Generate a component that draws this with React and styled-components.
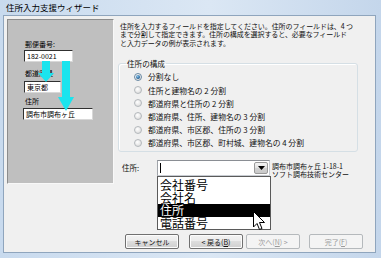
import React from 'react';
import styled, { createGlobalStyle } from 'styled-components';

const GlobalStyle = createGlobalStyle`
  html, body { margin: 0; padding: 0; }
  body {
    width: 381px; height: 258px; overflow: hidden;
    font-family: "Noto Sans CJK JP", "Noto Sans", sans-serif;
    color: #111;
  }
`;

const Window = styled.div`
  width: 381px;
  height: 258px;
  box-sizing: border-box;
  display: flex;
  flex-direction: column;
  padding: 0 5px 5px 3px;
  background: linear-gradient(to right, #c8daee 0%, #dbe7f4 55%, #c4d6eb 100%);
`;

const TitleBar = styled.div`
  height: 15px;
  display: flex;
  align-items: center;
  padding-left: 3px;
  font-size: 8.5px;
  line-height: 15px;
  color: #000;
  white-space: nowrap;
`;

const Content = styled.div`
  flex: 1;
  display: flex;
  flex-direction: column;
  box-sizing: border-box;
  padding: 3px;
  background: #f0f0f0;
  border: 1px solid #8fa5bd;
`;

const MainRow = styled.div`
  display: flex;
  align-items: flex-start;
`;

const PreviewPanel = styled.div`
  position: relative;
  width: 107px;
  height: 165px;
  box-sizing: border-box;
  flex-shrink: 0;
  display: flex;
  flex-direction: column;
  padding: 20px 0 0 16px;
  background: #bfbfbf;
  border: 1px solid;
  border-color: #8c8c8c #f8f8f8 #f8f8f8 #8c8c8c;
`;

const PreviewLabel = styled.div`
  font-size: 7px;
  line-height: 8px;
  height: 8px;
  margin-top: ${p => p.$mt || 0}px;
  padding-left: 1px;
  color: #000;
  white-space: nowrap;
`;

const PreviewInput = styled.div`
  width: ${p => p.$w}px;
  height: 12px;
  box-sizing: border-box;
  margin-top: ${p => p.$mt || 0}px;
  margin-left: ${p => p.$ml || 0}px;
  padding-left: 2px;
  background: #fff;
  border: 1px solid;
  border-color: #303030 #d8d8d8 #d8d8d8 #303030;
  font-size: 7px;
  line-height: 10px;
  color: #000;
  white-space: nowrap;
  overflow: hidden;
`;

const ArrowLayer = styled.svg`
  position: absolute;
  left: 0;
  top: 0;
  width: 105px;
  height: 163px;
  pointer-events: none;
`;

const RightColumn = styled.div`
  display: flex;
  flex-direction: column;
  margin-left: 4px;
  width: 240px;
`;

const Description = styled.div`
  margin-top: 3px;
  padding-left: 2px;
  font-size: 7px;
  letter-spacing: -0.08px;
  line-height: 8.4px;
  white-space: nowrap;
  color: #111;
`;

const GroupBox = styled.fieldset`
  margin: 12px 0 0 0;
  padding: 2px 0 2px 15px;
  border: 1px solid #d5dfe5;
  border-radius: 3px;
  box-shadow: inset 1px 1px 0 #fff;
  min-width: 0;
`;

const GroupLegend = styled.legend`
  margin-left: -8px;
  padding: 0 1px;
  font-size: 7.6px;
  line-height: 9px;
  color: #111;
`;

const RadioRow = styled.div`
  display: flex;
  align-items: center;
  height: 13.2px;
  gap: 6px;
  font-size: 7.8px;
  white-space: nowrap;
  color: #111;
`;

const RadioCircle = styled.span`
  width: 8px;
  height: 8px;
  box-sizing: border-box;
  border-radius: 50%;
  border: 1px solid ${p => (p.$checked ? '#6a8aa4' : '#b4b8bc')};
  background: radial-gradient(circle at 40% 35%, #ffffff 0%, #e8e8e8 55%, #d2d2d2 100%);
  display: flex;
  align-items: center;
  justify-content: center;
  flex-shrink: 0;
  &::after {
    content: '';
    display: ${p => (p.$checked ? 'block' : 'none')};
    width: 4px;
    height: 4px;
    border-radius: 50%;
    background: radial-gradient(circle at 40% 35%, #8cc4ea 0%, #2a6aa0 60%, #123e66 100%);
  }
`;

const FieldRow = styled.div`
  display: flex;
  align-items: flex-start;
  margin-top: 8px;
`;

const FieldLabel = styled.div`
  width: 39px;
  padding-left: 4px;
  box-sizing: border-box;
  font-size: 7.5px;
  line-height: 16px;
  white-space: nowrap;
  color: #111;
`;

const ComboWrap = styled.div`
  position: relative;
  width: 113px;
  flex-shrink: 0;
`;

const ComboBox = styled.div`
  height: 16px;
  box-sizing: border-box;
  display: flex;
  align-items: center;
  justify-content: space-between;
  padding: 0 1px 0 2px;
  background: #fff;
  border: 1px solid;
  border-color: #8a8e94 #c8ccd2 #c8ccd2 #a0a4aa;
`;

const Caret = styled.span`
  width: 1px;
  height: 10px;
  background: #000;
`;

const DropButton = styled.span`
  width: 14px;
  height: 12px;
  box-sizing: border-box;
  border: 1px solid #9a9a9a;
  border-radius: 2px;
  background: linear-gradient(#f4f4f4, #e2e2e2 50%, #d2d2d2 50%, #c8c8c8);
  display: flex;
  align-items: center;
  justify-content: center;
`;

const DropList = styled.div`
  position: absolute;
  left: 0;
  top: 100%;
  width: 114px;
  box-sizing: border-box;
  padding-top: 2px;
  background: #fff;
  border: 1px solid #5a5a5a;
  z-index: 2;
`;

const DropItem = styled.div`
  height: 12.5px;
  padding-left: 2px;
  font-size: 12px;
  line-height: 12.5px;
  background: ${p => (p.$selected ? '#000' : '#fff')};
  color: ${p => (p.$selected ? '#fff' : '#000')};
  white-space: nowrap;
`;

const Cursor = styled.svg`
  position: absolute;
  left: 95px;
  top: 34px;
  width: 13px;
  height: 20px;
`;

const AddressSample = styled.div`
  margin-left: 2px;
  margin-top: 2px;
  font-size: 7px;
  line-height: 8px;
  white-space: nowrap;
  color: #111;
`;

const ButtonRow = styled.div`
  display: flex;
  justify-content: flex-end;
  margin-top: auto;
  padding-right: 9px;
`;

const Button = styled.div`
  width: 54px;
  height: 15px;
  box-sizing: border-box;
  margin-left: ${p => p.$gap || 0}px;
  display: flex;
  align-items: center;
  justify-content: center;
  border-radius: 2px;
  font-size: 7px;
  white-space: nowrap;
  border: 1px solid ${p => (p.$disabled ? '#b5b9bc' : '#707070')};
  color: ${p => (p.$disabled ? '#9a9a9a' : '#111')};
  background: ${p =>
    p.$disabled
      ? '#f4f4f4'
      : 'linear-gradient(#f2f2f2, #ebebeb 50%, #dddddd 50%, #cfcfcf)'};
  box-shadow: ${p => (p.$disabled ? 'none' : 'inset 0 0 0 1px #fcfcfc')};
  u { text-decoration: underline; }
`;

const radios = [
  '分割なし',
  '住所と建物名の 2 分割',
  '都道府県と住所の 2 分割',
  '都道府県、住所、建物名の 3 分割',
  '都道府県、市区郡、住所の 3 分割',
  '都道府県、市区郡、町村城、建物名の 4 分割',
];

const items = ['会社番号', '会社名', '住所', '電話番号'];

export default function App() {
  return (
    <>
      <GlobalStyle />
      <Window>
        <TitleBar>住所入力支援ウィザード</TitleBar>
        <Content>
          <MainRow>
            <PreviewPanel>
              <PreviewLabel>郵便番号:</PreviewLabel>
              <PreviewInput $w={49} $mt={2}>182-0021</PreviewInput>
              <PreviewLabel $mt={7}>都道府県</PreviewLabel>
              <PreviewInput $w={37} $mt={4}>東京都</PreviewInput>
              <PreviewLabel $mt={4}>住所</PreviewLabel>
              <PreviewInput $w={70} $mt={3} $ml={-1}>調布市調布ヶ丘</PreviewInput>
              <ArrowLayer viewBox="0 0 105 163">
                <rect x="34" y="41" width="8" height="13" fill="#1ae4ee" />
                <polygon points="30,53 46,53 38,62" fill="#1ae4ee" />
                <rect x="54" y="41" width="8" height="37" fill="#1ae4ee" />
                <polygon points="50,77 66,77 58,91" fill="#1ae4ee" />
              </ArrowLayer>
            </PreviewPanel>
            <RightColumn>
              <Description>
                住所を入力するフィールドを指定してください。住所のフィールドは、4 つ
                <br />
                まで分割して指定できます。住所の構成を選択すると、必要なフィールド
                <br />
                と入力データの例が表示されます。
              </Description>
              <GroupBox>
                <GroupLegend>住所の構成</GroupLegend>
                {radios.map((r, i) => (
                  <RadioRow key={r}>
                    <RadioCircle $checked={i === 0} />
                    {r}
                  </RadioRow>
                ))}
              </GroupBox>
              <FieldRow>
                <FieldLabel>住所:</FieldLabel>
                <ComboWrap>
                  <ComboBox>
                    <Caret />
                    <DropButton>
                      <svg width="7" height="4" viewBox="0 0 7 4">
                        <polygon points="0,0 7,0 3.5,4" fill="#000" />
                      </svg>
                    </DropButton>
                  </ComboBox>
                  <DropList>
                    {items.map(it => (
                      <DropItem key={it} $selected={it === '住所'}>
                        {it}
                      </DropItem>
                    ))}
                    <Cursor viewBox="0 0 13 20">
                      <path
                        d="M0.5 0.5 L0.5 16 L4 12.5 L6.5 18.5 L9 17.5 L6.5 11.5 L11.5 11.5 Z"
                        fill="#fff"
                        stroke="#000"
                        strokeWidth="1"
                        strokeLinejoin="miter"
                      />
                    </Cursor>
                  </DropList>
                </ComboWrap>
                <AddressSample>
                  調布市調布ヶ丘 1-18-1
                  <br />
                  ソフト調布技術センター
                </AddressSample>
              </FieldRow>
            </RightColumn>
          </MainRow>
          <ButtonRow>
            <Button>キャンセル</Button>
            <Button $gap={10}>
              &lt; 戻る(<u>B</u>)
            </Button>
            <Button $gap={3} $disabled>
              次へ(<u>N</u>) &gt;
            </Button>
            <Button $gap={9} $disabled>
              完了(<u>F</u>)
            </Button>
          </ButtonRow>
        </Content>
      </Window>
    </>
  );
}
